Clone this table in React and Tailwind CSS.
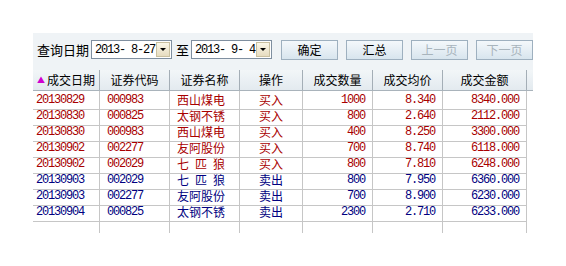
const ROWS = [
  ['20130829', '000983', '西山煤电', '买入', '1000', '8.340', '8340.000'],
  ['20130830', '000825', '太钢不锈', '买入', '800', '2.640', '2112.000'],
  ['20130830', '000983', '西山煤电', '买入', '400', '8.250', '3300.000'],
  ['20130902', '002277', '友阿股份', '买入', '700', '8.740', '6118.000'],
  ['20130902', '002029', '七\u2002匹\u2002狼', '买入', '800', '7.810', '6248.000'],
  ['20130903', '002029', '七\u2002匹\u2002狼', '卖出', '800', '7.950', '6360.000'],
  ['20130903', '002277', '友阿股份', '卖出', '700', '8.900', '6230.000'],
  ['20130904', '000825', '太钢不锈', '卖出', '2300', '2.710', '6233.000'],
]

const HEADERS = ['成交日期', '证券代码', '证券名称', '操作', '成交数量', '成交均价', '成交金额']

const COLS = 'grid grid-cols-[67px_70px_70px_63px_70px_70px_84px]'
const MONO = "font-['Liberation_Mono',monospace] text-[12px] tracking-[-1.2px]"
const CJK = "font-['Noto_Sans_CJK_SC',sans-serif] text-[12px]"

function DateBox({ value }) {
  return (
    <div className="flex h-[19px] w-[81px] shrink-0 items-center border border-[#7f8fa0] bg-white">
      <span className={`flex-1 pl-[3px] leading-none text-black whitespace-pre ${MONO}`}>{value}</span>
      <span className="mr-[1px] flex h-[15px] w-[14px] shrink-0 items-center justify-center border border-[#c9c0a0] bg-gradient-to-b from-[#fbf7e8] to-[#e6dcc0]">
        <span className="h-0 w-0 border-x-[3px] border-t-[3px] border-x-transparent border-t-black" />
      </span>
    </div>
  )
}

function Btn({ label, disabled }) {
  return (
    <div
      className={`flex h-[20px] w-[57px] shrink-0 items-center justify-center border border-[#9eb0bf] bg-gradient-to-b from-[#f4f8fb] to-[#d8e5ee] ${CJK} ${
        disabled ? 'text-[#a8b4bc]' : 'text-black'
      }`}
    >
      {label}
    </div>
  )
}

export default function App() {
  return (
    <div className="h-[266px] w-[566px] bg-white pl-[33px] pt-[33px]">
      <div className="w-[500px]">
        {/* toolbar */}
        <div className="flex h-[37px] items-center whitespace-nowrap bg-[#eff3f6] pb-[4px]">
          <span className="ml-[4px] shrink-0 font-['Noto_Sans_CJK_SC',sans-serif] text-[13px] text-black">查询日期</span>
          <div className="ml-[2px] shrink-0">
            <DateBox value="2013- 8-27" />
          </div>
          <span className="ml-[4px] mr-[2px] shrink-0 font-['Noto_Sans_CJK_SC',sans-serif] text-[13px] text-black">至</span>
          <DateBox value="2013- 9- 4" />
          <div className="ml-[9px] flex shrink-0 gap-[8px]">
            <Btn label="确定" />
            <Btn label="汇总" />
            <Btn label="上一页" disabled />
            <Btn label="下一页" disabled />
          </div>
        </div>

        {/* header */}
        <div className="flex h-[21px] border-b border-[#a9b3bb] bg-gradient-to-b from-[#f2f6f8] to-[#e3eaef]">
          <div className={COLS}>
            {HEADERS.map((h, i) => (
              <div
                key={h}
                className={`flex items-center justify-center border-r border-[#a4aeb6] text-black ${CJK}`}
              >
                {i === 0 && <span className="mr-[2px] text-[8px] text-[#d000d0]">▲</span>}
                {h}
              </div>
            ))}
          </div>
        </div>

        {/* rows */}
        {ROWS.map((r, idx) => {
          const color = r[3] === '买入' ? 'text-[#a80000]' : 'text-[#000080]'
          return (
            <div key={idx} className={`${COLS} h-[16px] ${color}`}>
              <div className={`flex items-center border-r border-b border-[#c6c6c6] pl-[3px] ${MONO}`}>{r[0]}</div>
              <div className={`flex items-center border-r border-b border-[#c6c6c6] pl-[7px] ${MONO}`}>{r[1]}</div>
              <div className={`flex items-center border-r border-b border-[#c6c6c6] pl-[7px] whitespace-pre leading-none ${CJK}`}>{r[2]}</div>
              <div className={`flex items-center justify-center border-r border-b border-[#c6c6c6] leading-none ${CJK}`}>{r[3]}</div>
              <div className={`flex items-center justify-end border-r border-b border-[#c6c6c6] pr-[7px] ${MONO}`}>{r[4]}</div>
              <div className={`flex items-center justify-end border-r border-b border-[#c6c6c6] pr-[7px] ${MONO}`}>{r[5]}</div>
              <div className={`flex items-center justify-end border-r border-b border-[#c6c6c6] pr-[7px] ${MONO}`}>{r[6]}</div>
            </div>
          )
        })}

        {/* empty filler */}
        <div className={`${COLS} h-[14px]`}>
          {HEADERS.map((h) => (
            <div key={h} className="border-r border-[#c6c6c6]" />
          ))}
        </div>
      </div>
    </div>
  )
}
